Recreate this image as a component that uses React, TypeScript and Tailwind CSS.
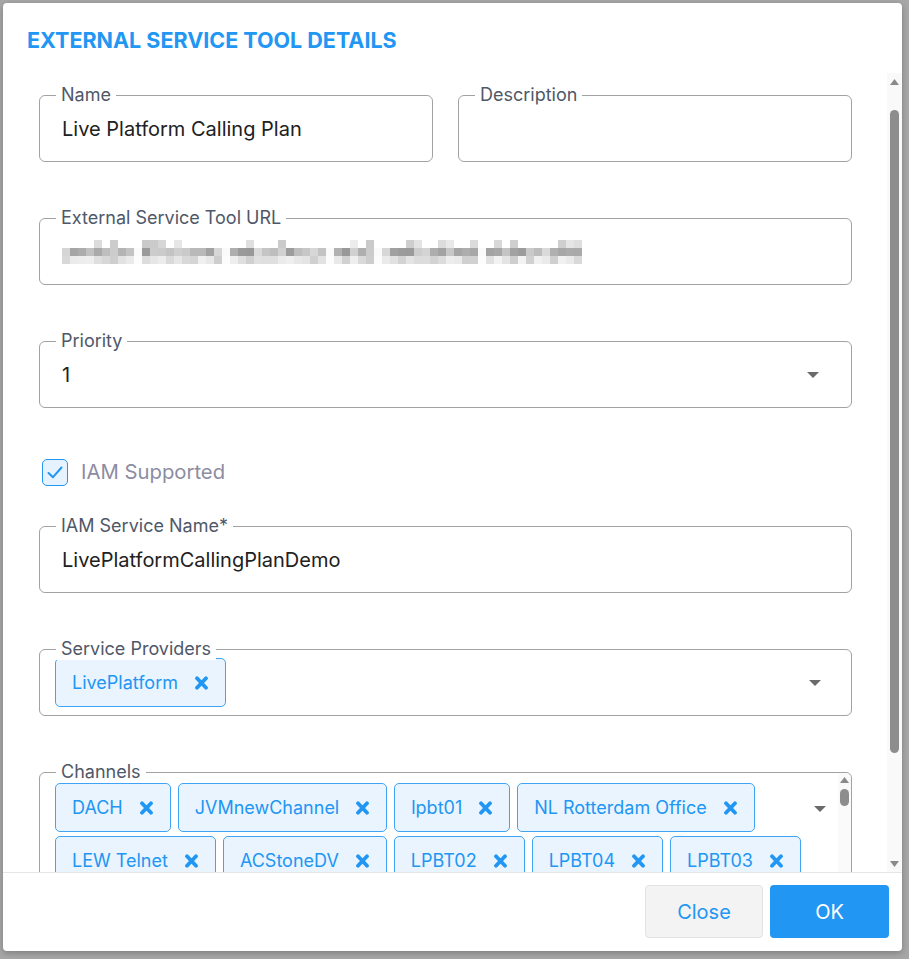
import React from "react";

const font = "font-['Inter','Noto_Sans','Liberation_Sans',sans-serif]";

// pixelated stand-in for the masked URL value
const urlMask = (() => {
    let seed = 11;
    const rnd = () => {
        seed = (seed * 9301 + 49297) % 233280;
        return seed / 233280;
    };
    const gaps = [9, 20, 33, 39, 52];
    const cols = 65;
    const rows: string[][] = [[], [], []];
    for (let c = 0; c < cols; c++) {
        const gap = gaps.includes(c);
        const top = rnd() > 0.72 && !gap ? 200 + Math.floor(rnd() * 40) : 255;
        const mid = gap ? 250 : 150 + Math.floor(rnd() * 70);
        const low = gap ? 252 : 205 + Math.floor(rnd() * 40);
        rows[0].push(`rgb(${top},${top},${top})`);
        rows[1].push(`rgb(${mid},${mid},${mid})`);
        rows[2].push(`rgb(${low},${low},${low})`);
    }
    return rows;
})();

const providers = ["LivePlatform"];
const channels = [
    ["DACH", "JVMnewChannel", "lpbt01", "NL Rotterdam Office"],
    ["LEW Telnet", "ACStoneDV", "LPBT02", "LPBT04", "LPBT03"],
];

function CloseMark() {
    return (
        <svg width="15" height="14" viewBox="0 0 15 14" className="shrink-0">
            <path
                d="M3 2.3 L12 11.7 M12 2.3 L3 11.7"
                stroke="#2196f3"
                strokeWidth="3.8"
                strokeLinecap="round"
                fill="none"
            />
        </svg>
    );
}

function Caret() {
    return (
        <svg width="12" height="6" viewBox="0 0 12 6">
            <path d="M0 0 L12 0 L6 6 Z" fill="#6b6b6b" />
        </svg>
    );
}

function Chip({ label }: { label: string }) {
    return (
        <span className="flex h-[49px] items-center gap-[16px] rounded-[5px] border border-[#3fa4f5] bg-[#e9f4fe] px-[16px] text-[18px] text-[#2196f3]">
            {label}
            <CloseMark />
        </span>
    );
}

function Field({
    label,
    className = "",
    children,
}: {
    label: string;
    className?: string;
    children?: React.ReactNode;
}) {
    return (
        <div
            className={`relative rounded-[6px] border border-[#a2a2a2] ${className}`}
        >
            <span className="absolute -top-[12px] left-[16px] bg-white px-[5px] text-[18px] leading-[22px] text-[#4f5868]">
                {label}
            </span>
            {children}
        </div>
    );
}

function ScrollTrack() {
    return (
        <div className="flex w-[15px] shrink-0 flex-col items-center bg-[#f9f9f9]">
            <svg width="9" height="6" viewBox="0 0 9 6" className="mt-[6px]">
                <path d="M0 6 L4.5 0 L9 6 Z" fill="#8a8a8a" />
            </svg>
            <div className="mt-[25px] h-[643px] w-[9px] rounded-full bg-[#8d8d8d]" />
            <div className="flex-1" />
            <svg width="9" height="6" viewBox="0 0 9 6" className="mb-[5px]">
                <path d="M0 0 L9 0 L4.5 6 Z" fill="#8a8a8a" />
            </svg>
        </div>
    );
}

export default function App() {
    return (
        <div
            className={`h-[959px] w-[909px] bg-[#a7a7a7] pl-[3px] pt-[3px] ${font}`}
        >
            <div className="flex h-[948px] w-[899px] flex-col overflow-hidden rounded-[4px] bg-white shadow-[0_2px_6px_rgba(0,0,0,0.25)]">
                <h2 className="h-[70px] shrink-0 pl-[24px] pt-[24px] text-[21.5px] font-bold leading-[26px] text-[#2196f3]">
                    EXTERNAL SERVICE TOOL DETAILS
                </h2>

                <div className="flex min-h-0 flex-1">
                    <div className="flex-1 overflow-hidden pl-[36px] pr-[35px] pt-[22px]">
                        <div className="grid grid-cols-2 gap-x-[25px]">
                            <Field label="Name" className="flex h-[67px] items-center px-[22px]">
                                <span className="text-[20px] text-[#212121]">
                                    Live Platform Calling Plan
                                </span>
                            </Field>
                            <Field label="Description" className="h-[67px]" />
                        </div>

                        <Field
                            label="External Service Tool URL"
                            className="mt-[56px] flex h-[67px] items-center px-[22px]"
                        >
                            <div className="flex flex-col">
                                {urlMask.map((row, r) => (
                                    <div key={r} className="flex">
                                        {row.map((c, i) => (
                                            <span
                                                key={i}
                                                className="h-[8px] w-[8px]"
                                                style={{ backgroundColor: c }}
                                            />
                                        ))}
                                    </div>
                                ))}
                            </div>
                        </Field>

                        <Field
                            label="Priority"
                            className="mt-[56px] flex h-[67px] items-center justify-between pl-[22px] pr-[32px]"
                        >
                            <span className="text-[20px] text-[#212121]">1</span>
                            <Caret />
                        </Field>

                        <label className="ml-[3px] mt-[51px] flex h-[27px] items-center gap-[13px]">
                            <span className="flex h-[27px] w-[26px] items-center justify-center rounded-[5px] border border-[#2196f3] bg-[#e6f2fd]">
                                <svg width="16" height="13" viewBox="0 0 16 13">
                                    <path
                                        d="M1.5 7 L6 11.2 L14.5 1.5"
                                        stroke="#2196f3"
                                        strokeWidth="2"
                                        fill="none"
                                        strokeLinecap="round"
                                        strokeLinejoin="round"
                                    />
                                </svg>
                            </span>
                            <span className="text-[20.3px] text-[#8c8ca2]">IAM Supported</span>
                        </label>

                        <Field
                            label="IAM Service Name*"
                            className="mt-[40px] flex h-[67px] items-center px-[22px]"
                        >
                            <span className="text-[20px] text-[#212121]">
                                LivePlatformCallingPlanDemo
                            </span>
                        </Field>

                        <Field
                            label="Service Providers"
                            className="mt-[56px] flex h-[67px] items-center justify-between pl-[15px] pr-[30px]"
                        >
                            <div className="flex gap-[7px]">
                                {providers.map((p) => (
                                    <Chip key={p} label={p} />
                                ))}
                            </div>
                            <Caret />
                        </Field>

                        <Field label="Channels" className="mt-[56px] flex h-[130px]">
                            <div className="flex flex-1 flex-col gap-[4px] pl-[15px] pt-[10px]">
                                {channels.map((row, r) => (
                                    <div key={r} className="flex gap-[7px]">
                                        {row.map((c) => (
                                            <Chip key={c} label={c} />
                                        ))}
                                    </div>
                                ))}
                            </div>
                            <div className="flex w-[36px] justify-center pt-[33px]">
                                <Caret />
                            </div>
                            <div className="flex w-[13px] flex-col items-center rounded-tr-[6px] bg-[#fafafa]">
                                <svg width="9" height="6" viewBox="0 0 9 6" className="mt-[4px]">
                                    <path d="M0 6 L4.5 0 L9 6 Z" fill="#8a8a8a" />
                                </svg>
                                <div className="mt-[6px] h-[17px] w-[9px] rounded-full bg-[#8d8d8d]" />
                            </div>
                        </Field>
                    </div>
                    <ScrollTrack />
                </div>

                <div className="flex h-[79px] shrink-0 items-start justify-end gap-[7px] border-t border-[#e6e6e6] pr-[13px] pt-[12px]">
                    <button className="h-[53px] w-[118px] rounded-[4px] border border-[#e2e2e2] bg-[#f3f3f3] text-[20px] text-[#2196f3]">
                        Close
                    </button>
                    <button className="h-[53px] w-[119px] rounded-[4px] bg-[#2196f3] text-[20px] text-white">
                        OK
                    </button>
                </div>
            </div>
        </div>
    );
}
